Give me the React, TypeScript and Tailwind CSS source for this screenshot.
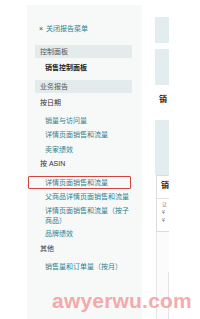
import React from "react";

const cjk = "font-['Liberation_Sans','Noto_Sans_CJK_SC',sans-serif]";

function Link({ children, className = "" }: { children: React.ReactNode; className?: string }) {
  return (
    <div className={`pl-[18px] h-[12px] leading-[12px] text-[7px] text-[#2e8290] whitespace-nowrap ${className}`}>
      {children}
    </div>
  );
}

function Header({ children, className = "" }: { children: React.ReactNode; className?: string }) {
  return (
    <div className={`ml-[8px] mr-[10px] h-[13px] leading-[13px] bg-[#e3ebed] pl-[5px] text-[7px] text-[#555] ${className}`}>
      {children}
    </div>
  );
}

function Group({ children, className = "" }: { children: React.ReactNode; className?: string }) {
  return (
    <div className={`pl-[13px] h-[12px] leading-[12px] text-[7px] text-[#333] whitespace-nowrap ${className}`}>
      {children}
    </div>
  );
}

export default function App() {
  return (
    <div className={`relative w-[200px] h-[319px] bg-white flex overflow-hidden pl-[27px] ${cjk}`}>
      <aside className="mt-[5px] w-[115px] shrink-0 bg-[#f7f8f8] flex flex-col pt-[18px]">
        <div className="pl-[12px] h-[12px] leading-[12px] text-[7px] whitespace-nowrap flex items-center">
          <span className="text-[#444] text-[7px] mr-[3px]">×</span>
          <span className="text-[#2e8290]">关闭报告菜单</span>
        </div>
        <Header className="mt-[10px]">控制面板</Header>
        <div className="mt-[4px] pl-[18px] h-[12px] leading-[12px] text-[7px] font-bold text-[#222]">销售控制面板</div>
        <Header className="mt-[6px]">业务报告</Header>
        <Group className="mt-[4px]">按日期</Group>
        <Link className="mt-[6px]">销量与访问量</Link>
        <Link className="mt-[2px]">详情页面销售和流量</Link>
        <Link className="mt-[3px]">卖家绩效</Link>
        <Group className="mt-[2px]">按 ASIN</Group>
        <div className="mt-[6px] ml-[1px] w-[103px] h-[13px] border border-[#d0453f] rounded-[1px] pl-[16px] leading-[11px] text-[7px] text-[#2e8290] whitespace-nowrap">
          详情页面销售和流量
        </div>
        <Link className="mt-[2px]">父商品详情页面销售和流量</Link>
        <div className="mt-[3px] pl-[18px] pr-[10px] leading-[10px] text-[7px] text-[#2e8290]">
          <div className="whitespace-nowrap">详情页面销售和流量（按子</div>
          <div className="whitespace-nowrap">商品）</div>
        </div>
        <Link className="mt-[2px]">品牌绩效</Link>
        <Group className="mt-[3px]">其他</Group>
        <Link className="mt-[6px]">销售量和订单量（按月）</Link>
      </aside>

      <main className="ml-[13px] w-[14px] shrink-0 overflow-hidden flex flex-col">
        <div className="mt-[17px] h-[26px] bg-[#e3edf0]" />
        <div className="mt-[6px] h-[36px] bg-[#e3edf0]" />
        <div className="mt-[9px] h-[12px] leading-[12px] pl-[4px] text-[8px] font-bold text-[#222] whitespace-nowrap">销</div>
        <div className="mt-[14px] h-[55px] bg-[#e3edf0]" />
        <div className="ml-[1px] h-[57px] border border-r-0 border-[#dcdcdc] bg-white flex flex-col">
          <div className="h-[23px] border-b border-[#e2e2e2] pl-[4px] pt-[5px] leading-[10px] text-[8px] font-bold text-[#222] whitespace-nowrap">销</div>
          <div className="pl-[5px] pt-[1px] flex flex-col text-[5px] leading-[8px] text-[#666]">
            <span>让</span>
            <span>¥</span>
            <span>¥</span>
          </div>
        </div>
        <div className="ml-[1px] flex-1 border-l border-[#e6e6e6] bg-[#fbfbfb] flex">
          <div className="flex-1" />
          <div className="mt-[40px] w-[1px] bg-[#e4e4e4]" />
        </div>
      </main>

      <div className="absolute left-[52px] top-[290px] text-[21px] leading-[21px] font-bold font-['Liberation_Sans',sans-serif] text-[#f08a8a] opacity-70 tracking-[0.2px] whitespace-nowrap">
        awyerwu.com
      </div>
    </div>
  );
}
